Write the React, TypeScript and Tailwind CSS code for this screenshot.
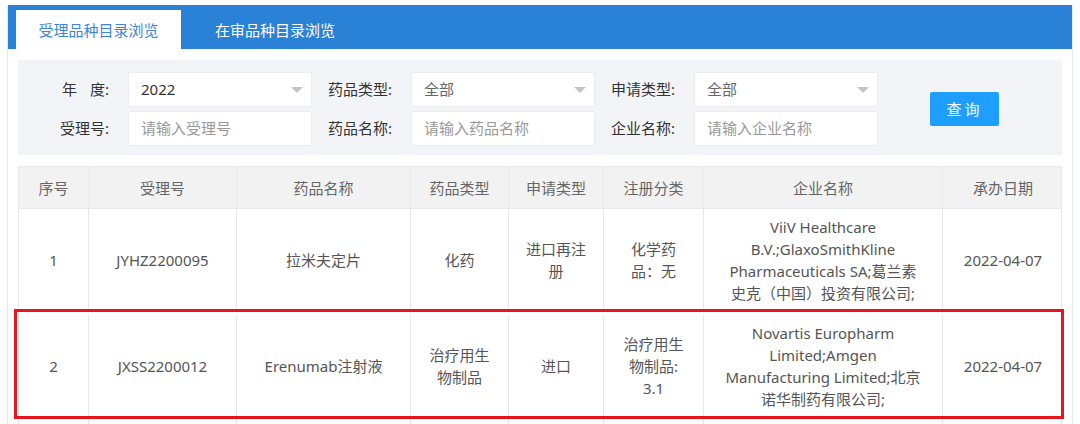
import React from 'react'

const font = { fontFamily: '"Noto Sans", "Noto Sans CJK SC", sans-serif' }

const cols = 'grid grid-cols-[70px_148px_174px_98px_95px_100px_239px_120px]'

interface Row {
  no: string
  code: string
  name: string
  type: string
  apply: string
  reg: string
  company: string
  date: string
}

const rows: Row[] = [
  {
    no: '1',
    code: 'JYHZ2200095',
    name: '拉米夫定片',
    type: '化药',
    apply: '进口再注册',
    reg: '化学药品：无',
    company: 'ViiV Healthcare B.V.;GlaxoSmithKline Pharmaceuticals SA;葛兰素史克（中国）投资有限公司;',
    date: '2022-04-07',
  },
  {
    no: '2',
    code: 'JXSS2200012',
    name: 'Erenumab注射液',
    type: '治疗用生物制品',
    apply: '进口',
    reg: '治疗用生物制品: 3.1',
    company: 'Novartis Europharm Limited;Amgen Manufacturing Limited;北京诺华制药有限公司;',
    date: '2022-04-07',
  },
]

function Caret() {
  return <span className="h-0 w-0 border-x-[6px] border-t-[6px] border-x-transparent border-t-[#c4c4c4]" />
}

function Field({ label, labelW, value, placeholder, select }: { label: React.ReactNode; labelW: string; value?: string; placeholder?: string; select?: boolean }) {
  return (
    <div className="flex items-center">
      <div className={`${labelW} pr-[19px] text-right text-[15px] text-[#333]`}>{label}</div>
      <div className="flex h-[35px] w-[184px] items-center justify-between rounded-[2px] border border-[#ececec] bg-white pl-[12px] pr-[8px] text-[15px]">
        {value ? <span className={value === '2022' ? 'text-[#333]' : 'text-[#666]'}>{value}</span> : <span className="text-[#999]">{placeholder}</span>}
        {select && <Caret />}
      </div>
    </div>
  )
}

function Cell({ children, last, className = '' }: { children?: React.ReactNode; last?: boolean; className?: string }) {
  return (
    <div className={`flex items-center justify-center px-[15px] text-center leading-[22px] ${last ? '' : 'border-r border-[#e8e8e8]'} ${className}`}>
      {children}
    </div>
  )
}

export default function App() {
  return (
    <div className="h-[424px] w-[1080px] overflow-hidden bg-white" style={font}>
      <div className="ml-[7px] mt-[5px] w-[1066px] border-x border-[#e3e9f1]">
        {/* tabs */}
        <div className="flex h-[44px] items-end bg-[#2a82d6] pl-[8px]">
          <div className="flex h-[39px] w-[165px] items-center justify-center bg-white pt-[1px] text-[15px] text-[#3a85d5]">受理品种目录浏览</div>
          <div className="flex h-[39px] w-[188px] items-center justify-center pt-[1px] text-[15px] text-white">在审品种目录浏览</div>
        </div>

        <div className="px-[10px] pt-[11px]">
          {/* filters */}
          <div className="flex items-center bg-[#f3f4f8] pb-[9px] pt-[12px]">
            <div className="flex flex-col gap-[4px]">
              <div className="flex">
                <Field label={<span>年<span className="inline-block w-[13px]" />度:</span>} labelW="w-[110px]" value="2022" select />
                <Field label="药品类型:" labelW="w-[99px]" value="全部" select />
                <Field label="申请类型:" labelW="w-[99px]" value="全部" select />
              </div>
              <div className="flex">
                <Field label="受理号:" labelW="w-[110px]" placeholder="请输入受理号" />
                <Field label="药品名称:" labelW="w-[99px]" placeholder="请输入药品名称" />
                <Field label="企业名称:" labelW="w-[99px]" placeholder="请输入企业名称" />
              </div>
            </div>
            <button className="ml-[52px] flex h-[34px] w-[69px] items-center justify-center rounded-[2px] bg-[#1e9fff] text-[15px] tracking-[3px] text-white">
              查询
            </button>
          </div>

          {/* table */}
          <div className="mt-[11px] border-x border-t border-[#e8e8e8] text-[15px] text-[#555]">
            <div className={`${cols} h-[42px] border-b border-[#e8e8e8] bg-[#f2f2f2] text-[#666]`}>
              {['序号', '受理号', '药品名称', '药品类型', '申请类型', '注册分类', '企业名称', '承办日期'].map((h, i) => (
                <Cell key={h} last={i === 7} className="px-[4px]">
                  {h}
                </Cell>
              ))}
            </div>
            {rows.map((r, idx) => (
              <div key={r.no} className={`${cols} relative border-b border-[#e8e8e8] ${idx === 0 ? 'h-[102px]' : 'h-[107px] pt-[3px]'}`}>
                <Cell>{r.no}</Cell>
                <Cell>{r.code}</Cell>
                <Cell>{r.name}</Cell>
                <Cell>{r.type}</Cell>
                <Cell>{r.apply}</Cell>
                <Cell>{r.reg}</Cell>
                <Cell className="px-[18px]">{r.company}</Cell>
                <Cell last>{r.date}</Cell>
                {idx === 1 && <div className="absolute -bottom-[2px] -left-[5px] -right-[3px] -top-[2px] border-[3px] border-[#e8141e]" />}
              </div>
            ))}
            <div className={`${cols} h-[100px]`}>
              {Array.from({ length: 8 }).map((_, i) => (
                <Cell key={i} last={i === 7} />
              ))}
            </div>
          </div>
        </div>
      </div>
    </div>
  )
}
